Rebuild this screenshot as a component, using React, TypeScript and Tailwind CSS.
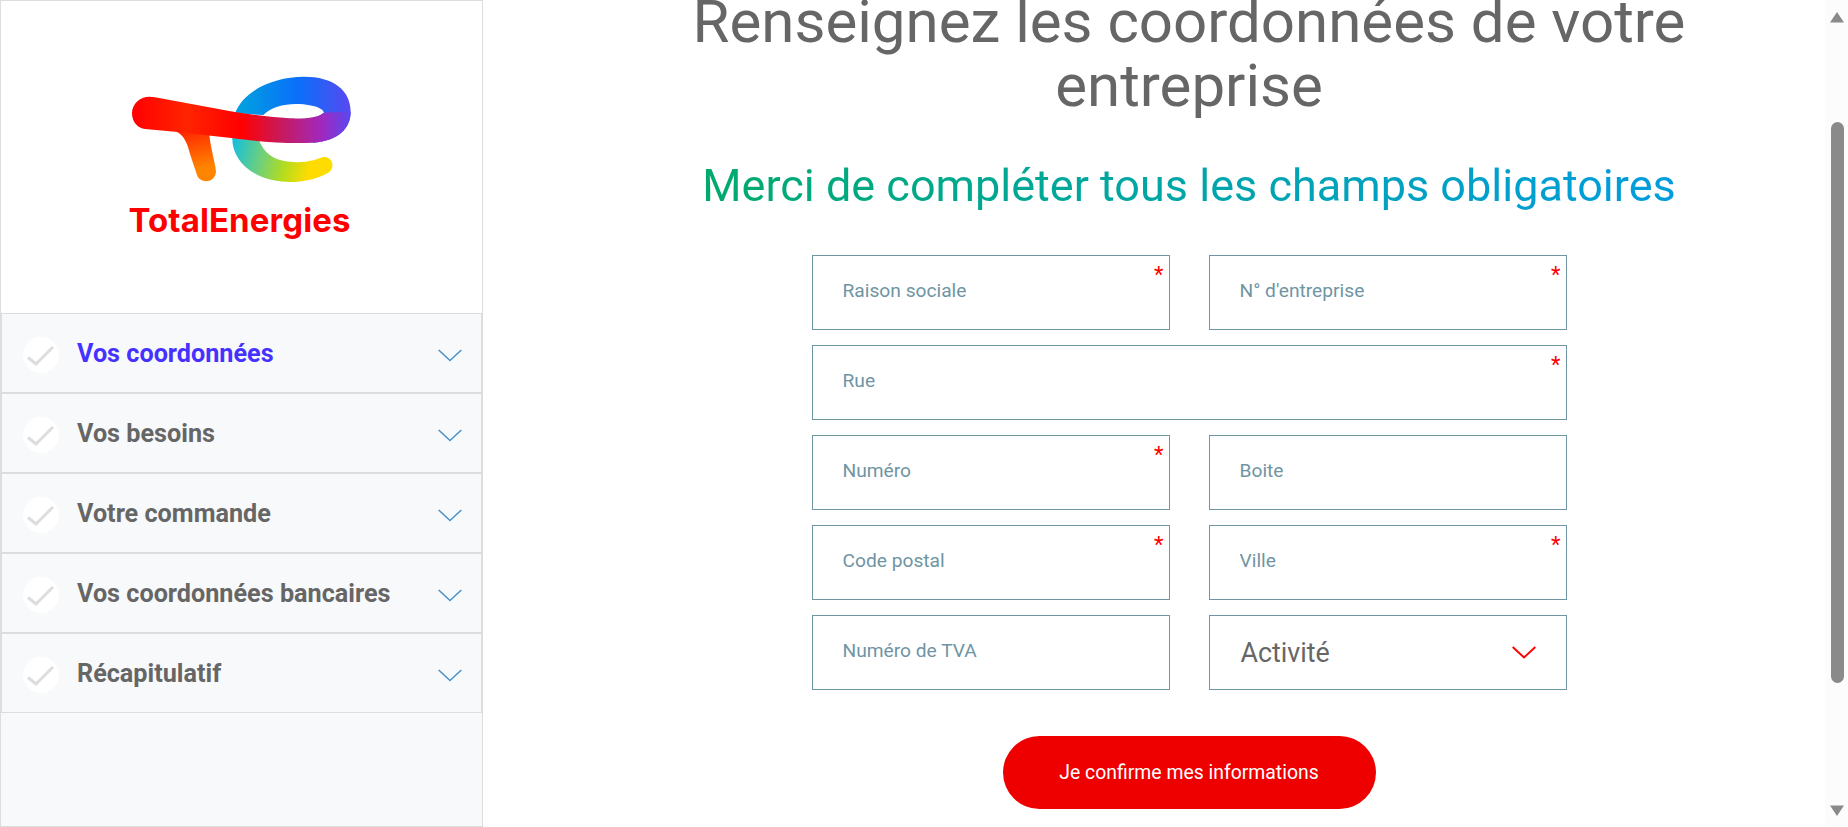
const steps = ['Vos coordonnées', 'Vos besoins', 'Votre commande', 'Vos coordonnées bancaires', 'Récapitulatif'];

function Logo() {
  return (
    <svg width="280" height="135" viewBox="0 0 840 405" fill="none">
      <defs>
        <linearGradient id="arc" gradientUnits="userSpaceOnUse" x1="400" y1="0" x2="755" y2="0">
          <stop offset="0" stopColor="#00a5dc" />
          <stop offset="0.55" stopColor="#0a6ffa" />
          <stop offset="1" stopColor="#5a48f0" />
        </linearGradient>
        <linearGradient id="tail" gradientUnits="userSpaceOnUse" x1="400" y1="230" x2="690" y2="300">
          <stop offset="0" stopColor="#18bfd8" />
          <stop offset="0.3" stopColor="#6fd07a" />
          <stop offset="0.55" stopColor="#b4dc1e" />
          <stop offset="0.8" stopColor="#ffdc00" />
        </linearGradient>
        <linearGradient id="leg" gradientUnits="userSpaceOnUse" x1="290" y1="180" x2="320" y2="320">
          <stop offset="0" stopColor="#ff2a00" />
          <stop offset="0.8" stopColor="#ff8400" />
        </linearGradient>
        <linearGradient id="band" gradientUnits="userSpaceOnUse" x1="96" y1="0" x2="752" y2="0">
          <stop offset="0" stopColor="#ff0000" />
          <stop offset="0.25" stopColor="#ff2400" />
          <stop offset="0.5" stopColor="#ff0000" />
          <stop offset="0.68" stopColor="#c81a5c" />
          <stop offset="0.87" stopColor="#a028c0" />
          <stop offset="1" stopColor="#5a48f0" />
        </linearGradient>
      </defs>
      <path
        d="M405 130C430 62 520 20 612 20C700 20 752 60 752 125C752 175 715 212 640 218L600 170L672 128C668 116 650 108 610 103C565 98 515 108 490 135Z"
        fill="url(#arc)"
      />
      <path
        d="M397 200C393 270 460 336 570 336C620 336 660 322 685 308C703 296 702 270 680 262C668 259 655 267 640 271C600 281 550 278 520 262C500 250 485 232 478 212Z"
        fill="url(#tail)"
      />
      <path
        d="M225 183C255 195 263 225 272 258L291 315C300 342 345 340 348 305C346 280 332 235 328 195Z"
        fill="url(#leg)"
      />
      <path
        d="M148 80C120 80 96 102 96 130C96 158 115 175 135 177L225 185L400 205C470 214 560 222 640 218C715 212 752 175 752 125L672 128C660 140 620 147 570 145C500 141 450 133 400 125L165 82Z"
        fill="url(#band)"
      />
    </svg>
  );
}

function Check() {
  return (
    <div className="flex h-9 w-9 shrink-0 items-center justify-center rounded-full bg-white">
      <svg width="28" height="22" viewBox="0 0 28 22" fill="none" className="mt-[3px]">
        <path d="M1 11.5L9 18L26 1" stroke="#dddddd" strokeWidth="3" />
      </svg>
    </div>
  );
}

function Chevron({ color, weight = 1.6 }: { color: string; weight?: number }) {
  return (
    <svg width="24" height="13" viewBox="0 0 24 13" fill="none">
      <path d="M0.7 1L12 11.5L23.3 1" stroke={color} strokeWidth={weight} />
    </svg>
  );
}

function Field({ label, required, wide }: { label: string; required?: boolean; wide?: boolean }) {
  return (
    <div className={`relative h-[75px] border border-[#6f95a3] ${wide ? 'col-span-2' : ''}`}>
      <input
        placeholder={label}
        className="h-full w-full pb-[5px] pl-[30px] pr-6 text-[19.2px] outline-none placeholder:text-[#6f95a3]"
      />
      {required && <span className="absolute right-[5px] top-[6px] text-[22px] leading-[26px] text-[#ff0000]">*</span>}
    </div>
  );
}

export default function App() {
  return (
    <div className="flex h-[827px] w-full overflow-hidden bg-white font-[Roboto,sans-serif]">
      <aside className="flex h-full w-[483px] shrink-0 flex-col border border-[#dddddd] bg-[#f8f9fb]">
        <div className="flex h-[312px] shrink-0 flex-col items-center bg-white pr-[4px] pt-[69px]">
          <Logo />
          <div className="mt-[-5px] font-[Inter,sans-serif] text-[33px] font-bold leading-[40px] tracking-[0.1px] text-[#ff0000]">
            TotalEnergies
          </div>
        </div>
        {steps.map((step, i) => (
          <div
            key={step}
            className="flex h-[80px] shrink-0 items-center border border-[#dddddd] pl-[21px] pr-[19px] pt-[4px] first:border-t-0"
          >
            <Check />
            <span className={`ml-[18px] flex-1 pb-[2px] text-[25.2px] font-bold ${i === 0 ? 'text-[#4632ff]' : 'text-[#666666]'}`}>
              {step}
            </span>
            <Chevron color="#4a94c8" />
          </div>
        ))}
      </aside>

      <main className="flex min-w-0 flex-1 flex-col items-center pl-[70px]">
        <h1 className="mt-[-10px] w-[1000px] text-center text-[60px] font-normal leading-[64px] text-[#666666]">
          Renseignez les coordonnées de votre entreprise
        </h1>
        <h2 className="mt-[42px] bg-gradient-to-r from-[#00aa6c] to-[#009cdf] bg-clip-text text-[45px] font-normal leading-[52px] text-transparent">
          Merci de compléter tous les champs obligatoires
        </h2>
        <form className="mt-[43px] grid w-[755px] grid-cols-[358px_358px] gap-x-[39px] gap-y-[15px]">
          <Field label="Raison sociale" required />
          <Field label="N° d'entreprise" required />
          <Field label="Rue" required wide />
          <Field label="Numéro" required />
          <Field label="Boite" />
          <Field label="Code postal" required />
          <Field label="Ville" required />
          <Field label="Numéro de TVA" />
          <div className="flex h-[75px] items-center justify-between border border-[#6f95a3] pl-[31px] pr-[30px] text-[26.8px] text-[#666666]">
            <span className="pt-[2px]">Activité</span>
            <Chevron color="#ff0000" weight={2} />
          </div>
        </form>
        <button className="mt-[46px] h-[73px] w-[373px] rounded-full bg-[#ee0000] pt-[1px] text-[19.4px] text-white">
          Je confirme mes informations
        </button>
      </main>

      <div className="flex h-full w-[23px] shrink-0 flex-col items-center bg-[#fcfcfc] pl-[1px]">
        <svg width="14" height="11" viewBox="0 0 14 11" className="mt-[12px]">
          <path d="M7 0L14 10.5H0Z" fill="#8a8a8a" />
        </svg>
        <div className="mt-[99px] h-[561px] w-[13px] rounded-full bg-[#8a8a8a]" />
        <svg width="14" height="11" viewBox="0 0 14 11" className="mt-auto mb-[11px]">
          <path d="M7 11L14 0.5H0Z" fill="#8a8a8a" />
        </svg>
      </div>
    </div>
  );
}
